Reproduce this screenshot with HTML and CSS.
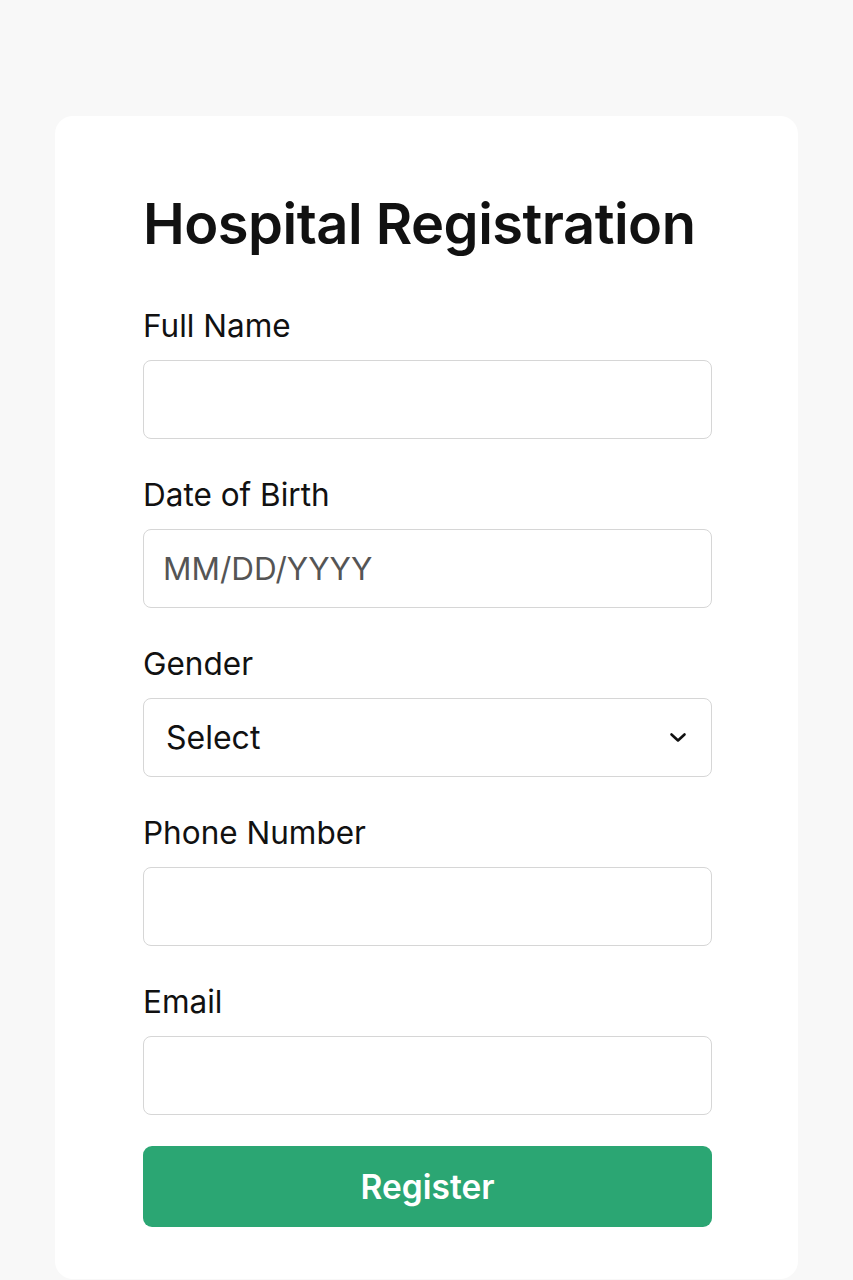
FILE: index.html
```html
<!DOCTYPE html>
<html lang="en">
<head>
<meta charset="utf-8">
<title>Hospital Registration</title>
<link rel="stylesheet" href="styles.css">
</head>
<body>
<main class="page">
  <form class="card">
    <h1 class="title">Hospital Registration</h1>
    <div class="field">
      <label class="label" for="name">Full Name</label>
      <input class="input" id="name" type="text">
    </div>
    <div class="field">
      <label class="label" for="dob">Date of Birth</label>
      <input class="input" id="dob" type="text" placeholder="MM/DD/YYYY">
    </div>
    <div class="field">
      <label class="label" for="gender">Gender</label>
      <div class="select">
        <span class="select-text">Select</span>
        <svg class="chev" width="18" height="11" viewBox="0 0 18 11"><path d="M2.5 2.5 L9 8.5 L15.5 2.5" fill="none" stroke="#111" stroke-width="2.6" stroke-linecap="round" stroke-linejoin="round"/></svg>
      </div>
    </div>
    <div class="field">
      <label class="label" for="phone">Phone Number</label>
      <input class="input" id="phone" type="text">
    </div>
    <div class="field">
      <label class="label" for="email">Email</label>
      <input class="input" id="email" type="text">
    </div>
    <button class="btn" type="button">Register</button>
  </form>
</main>
</body>
</html>
```

FILE: styles.css
```css
* { box-sizing: border-box; }
html, body { margin: 0; padding: 0; }
body {
  background: #f8f8f8;
  font-family: Inter, "Noto Sans", sans-serif;
  color: #111;
}
.page {
  padding: 116px 55px 0 55px;
  height: 1280px;
  overflow: hidden;
}
.card {
  background: #fff;
  border-radius: 18px;
  padding: 72px 86px 52px 88px;
  display: flex;
  flex-direction: column;
  min-height: 1163px;
}
.title {
  margin: 0 0 49px 0;
  font-size: 56px;
  line-height: 72px;
  font-weight: 600;
  letter-spacing: -0.5px;
  color: #111;
}
.field {
  display: flex;
  flex-direction: column;
  gap: 17px;
  margin-bottom: 39px;
}
.field:last-of-type { margin-bottom: 31px; }
.label {
  font-size: 31.5px;
  line-height: 34px;
  font-weight: 400;
  color: #111;
}
.input, .select {
  height: 79px;
  border: 1px solid #d6d6d6;
  border-radius: 8px;
  background: #fff;
  font-family: inherit;
  font-size: 31.5px;
  padding: 0 19px;
  color: #111;
  width: 100%;
}
.input::placeholder { color: #555; }
.select {
  display: flex;
  align-items: center;
  justify-content: space-between;
  padding: 0 24px 0 22px;
}
.select-text { font-size: 32px; }
.btn {
  height: 81px;
  border: none;
  border-radius: 9px;
  background: #2ba673;
  color: #fff;
  font-family: inherit;
  font-size: 33.5px;
  font-weight: 600;
}
```
